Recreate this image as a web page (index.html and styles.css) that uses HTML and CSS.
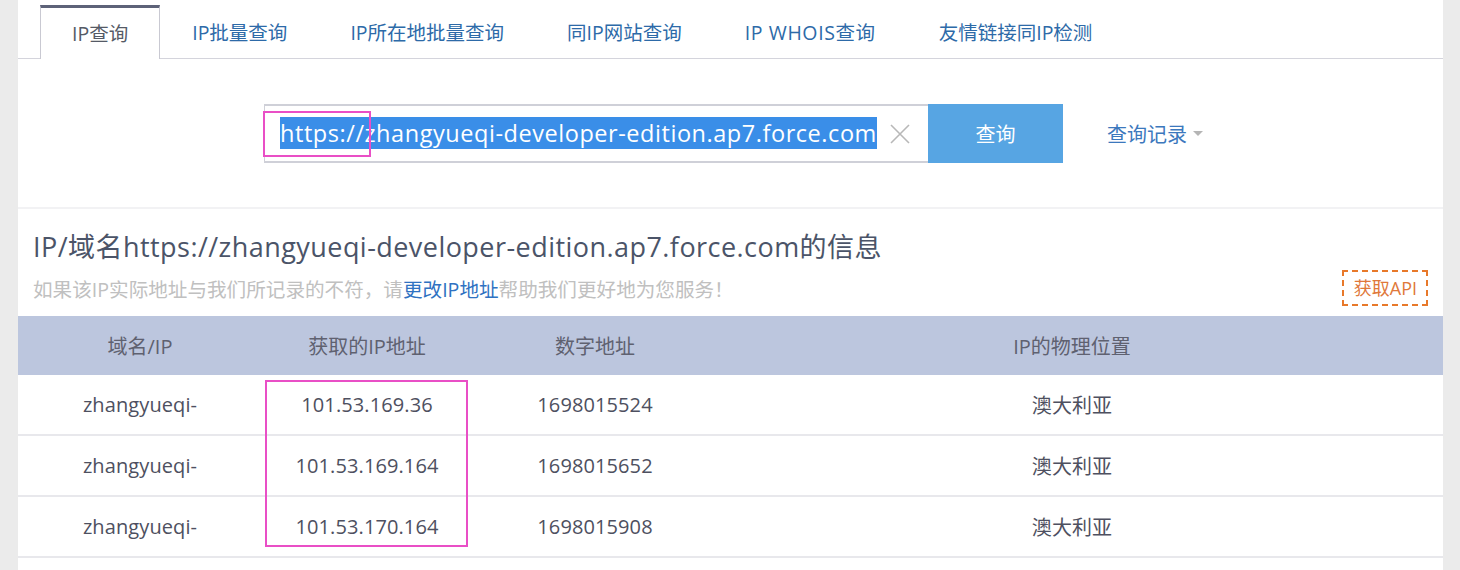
FILE: index.html
```html
<!DOCTYPE html>
<html lang="zh-CN">
<head>
<meta charset="utf-8">
<title>IP查询</title>
<link rel="stylesheet" href="styles.css">
</head>
<body>
<div class="page">
  <nav class="tabs">
    <a class="tab active">IP查询</a>
    <a class="tab">IP批量查询</a>
    <a class="tab">IP所在地批量查询</a>
    <a class="tab">同IP网站查询</a>
    <a class="tab wide">IP WHOIS查询</a>
    <a class="tab">友情链接同IP检测</a>
  </nav>

  <section class="search">
    <div class="input-box">
      <div class="input-text"><span class="sel">https://zhangyueqi-developer-edition.ap7.force.com</span></div>
      <span class="clear">
        <svg width="22" height="22" viewBox="0 0 22 22"><path d="M2 2 L20 20 M20 2 L2 20" stroke="#b8b8b8" stroke-width="1.6" fill="none"/></svg>
      </span>
    </div>
    <button class="btn">查询</button>
    <a class="history">查询记录<span class="caret"></span></a>
  </section>

  <section class="info">
    <h1 class="title">IP/域名https://zhangyueqi-developer-edition.ap7.force.com的信息</h1>
    <div class="sub-row">
      <p class="sub">如果该IP实际地址与我们所记录的不符，请<a class="link">更改IP地址</a>帮助我们更好地为您服务！</p>
      <a class="api">获取API</a>
    </div>
  </section>

  <div class="table">
    <div class="row head">
      <div class="c c1">域名/IP</div>
      <div class="c c2">获取的IP地址</div>
      <div class="c c3">数字地址</div>
      <div class="c c4">IP的物理位置</div>
    </div>
    <div class="row">
      <div class="c c1">zhangyueqi-</div>
      <div class="c c2">101.53.169.36</div>
      <div class="c c3">1698015524</div>
      <div class="c c4">澳大利亚</div>
    </div>
    <div class="row">
      <div class="c c1">zhangyueqi-</div>
      <div class="c c2">101.53.169.164</div>
      <div class="c c3">1698015652</div>
      <div class="c c4">澳大利亚</div>
    </div>
    <div class="row">
      <div class="c c1">zhangyueqi-</div>
      <div class="c c2">101.53.170.164</div>
      <div class="c c3">1698015908</div>
      <div class="c c4">澳大利亚</div>
    </div>
  </div>

  <div class="mark mark-a"></div>
  <div class="mark mark-b"></div>
</div>
</body>
</html>
```

FILE: styles.css
```css
* { box-sizing: border-box; }
html, body { margin: 0; padding: 0; }
body {
  background: #ebebeb;
  font-family: "Open Sans", "Noto Sans CJK SC", sans-serif;
  color: #555;
  overflow: hidden;
}
.page {
  position: relative;
  margin: 0 17px 0 18px;
  background: #fff;
  height: 570px;
}
a { text-decoration: none; cursor: pointer; }

/* tabs */
.tabs {
  display: flex;
  padding: 5px 0 0 22px;
  border-bottom: 1px solid #d4d4dc;
  height: 59px;
}
.tab {
  padding: 0 31px 0 32px;
  height: 53px;
  line-height: 55px;
  font-size: 19.5px;
  color: #2d6aa8;
  white-space: nowrap;
}
.tab.wide { letter-spacing: 0.6px; }
.tab.active {
  color: #555a66;
  border-top: 3px solid #5d6278;
  border-left: 1px solid #c9c9d2;
  border-right: 1px solid #c9c9d2;
  background: #fff;
  height: 54px;
  line-height: 51px;
  padding: 0 31px 0 31px;
}

/* search */
.search {
  display: flex;
  align-items: center;
  padding: 45px 0 44px 246px;
  border-bottom: 2px solid #f2f2f4;
}
.input-box {
  display: flex;
  align-items: center;
  width: 664px;
  height: 59px;
  border-top: 2px solid #cfd0d8;
  border-bottom: 2px solid #cfd0d8;
  border-left: 1px solid #cfd0d8;
}
.input-text {
  width: 604px;
  margin-left: 15px;
  white-space: nowrap;
  font-size: 23.5px;
  letter-spacing: 0.55px;
  line-height: 27px;
}
.sel {
  background: #3a8ee8;
  color: #fff;
}
.clear {
  display: flex;
  margin-left: 5px;
}
.btn {
  width: 135px;
  height: 59px;
  border: 0;
  background: #57a5e3;
  color: #fff;
  font-family: inherit;
  font-size: 20px;
  padding: 0;
}
.history {
  margin-left: 44px;
  font-size: 20px;
  color: #3c78bd;
  display: flex;
  align-items: center;
}
.caret {
  display: inline-block;
  margin-left: 6px;
  border-left: 5px solid transparent;
  border-right: 5px solid transparent;
  border-top: 5px solid #b5b5b5;
}

/* info */
.info {
  padding: 18px 15px 10px 15px;
}
.title {
  margin: 0;
  font-weight: normal;
  font-size: 27px;
  letter-spacing: 0.45px;
  line-height: 40px;
  color: #4b5468;
  white-space: nowrap;
}
.sub-row {
  display: flex;
  align-items: center;
  justify-content: space-between;
  margin-top: 3px;
}
.sub {
  margin: 0;
  font-size: 19.6px;
  color: #c0c0c0;
  white-space: nowrap;
}
.link { color: #2f72c2; }
.api {
  border: 2px dashed #e8792a;
  color: #e0783a;
  font-size: 18px;
  padding: 0 9px 0 10px;
  height: 36px;
  line-height: 32px;
}

/* table */
.table {
  display: flex;
  flex-direction: column;
}
.row {
  display: grid;
  grid-template-columns: 244px 210px 246px 708px 17px;
  height: 61px;
  border-bottom: 2px solid #e8e8ec;
  align-items: center;
  font-size: 20px;
  letter-spacing: 0.1px;
  color: #4e5060;
}
.row.head {
  height: 59px;
  background: #bcc6de;
  border-bottom: 0;
  color: #5f6170;
  font-size: 20px;
  letter-spacing: 0;
}
.c { text-align: center; white-space: nowrap; }

/* annotation overlays */
.mark {
  position: absolute;
  border: 2px solid #e94fc6;
  pointer-events: none;
}
.mark-a { left: 245px; top: 111px; width: 108px; height: 46px; }
.mark-b { left: 247px; top: 380px; width: 203px; height: 167px; }
```
